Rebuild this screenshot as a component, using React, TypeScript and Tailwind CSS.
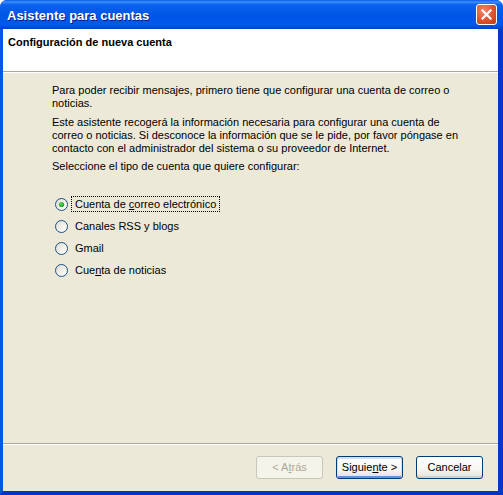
import type { ReactNode } from 'react'

const font = { fontFamily: '"Liberation Sans", Arial, sans-serif' }

function Radio({ checked }: { checked?: boolean }) {
  return (
    <svg width="13" height="13" viewBox="0 0 13 13" className="shrink-0">
      <defs>
        <linearGradient id="rfill" x1="0" y1="0" x2="1" y2="1">
          <stop offset="0" stopColor="#DCDAD1" />
          <stop offset="0.6" stopColor="#F4F3EE" />
          <stop offset="1" stopColor="#FFFFFF" />
        </linearGradient>
        <radialGradient id="rdot" cx="0.4" cy="0.4" r="0.6">
          <stop offset="0" stopColor="#5FE05C" />
          <stop offset="1" stopColor="#1C9A1C" />
        </radialGradient>
      </defs>
      <circle cx="6.5" cy="6.5" r="6" fill="url(#rfill)" stroke="#1C5180" strokeWidth="1" />
      {checked && <circle cx="6.5" cy="6.5" r="2.6" fill="url(#rdot)" />}
    </svg>
  )
}

function Option({ children, checked, focused }: { children: ReactNode; checked?: boolean; focused?: boolean }) {
  return (
    <div className="flex h-[22px] items-center">
      <Radio checked={checked} />
      <span
        className={`ml-[3px] px-[3px] leading-[14px] border border-dotted ${focused ? 'border-black' : 'border-transparent'}`}
      >
        {children}
      </span>
    </div>
  )
}

function Button({ children, disabled, primary }: { children: ReactNode; disabled?: boolean; primary?: boolean }) {
  const base = 'flex h-[23px] w-[67px] items-center justify-center rounded-[3px] border text-[11px]'
  if (disabled)
    return <div className={`${base} border-[#C9C7BA] bg-[#F5F4EA] text-[#ACA899]`}>{children}</div>
  return (
    <div
      className={`${base} border-[#003C74] bg-[linear-gradient(to_bottom,#FFFFFF_0%,#F7F6F2_60%,#E3E0D6_100%)] text-black ${
        primary ? 'shadow-[inset_0_1px_0_1px_#CEE1FC,inset_0_-1px_0_1px_#6C8FE0]' : 'shadow-[inset_0_-2px_0_0_#D6D0C5]'
      }`}
    >
      {children}
    </div>
  )
}

export default function App() {
  return (
    <div className="h-[495px] w-[503px] bg-white" style={font}>
      <div className="flex h-full flex-col overflow-hidden rounded-t-[7px] bg-[#0A48D8]">
        {/* title bar */}
        <div className="flex h-[29px] shrink-0 items-center justify-between bg-[linear-gradient(to_bottom,#0A5DE8_0%,#3D8EF9_7%,#0A62EE_16%,#0055E5_55%,#0059EC_85%,#0042C8_100%)] pl-[7px] pr-[6px]">
          <span className="pt-[3px] text-[13px] font-bold text-white [text-shadow:1px_1px_#0F1A8C]">
            Asistente para cuentas
          </span>
          <div className="flex h-[21px] w-[21px] items-center justify-center rounded-[3px] border border-white bg-[radial-gradient(circle_at_35%_30%,#F0876A_0%,#E0522E_55%,#C23A12_100%)]">
            <svg width="11" height="11" viewBox="0 0 11 11">
              <path d="M1.5 1.5 L9.5 9.5 M9.5 1.5 L1.5 9.5" stroke="white" strokeWidth="2.2" strokeLinecap="square" />
            </svg>
          </div>
        </div>

        {/* client area */}
        <div className="flex flex-1 flex-col border-b-[4px] border-l-[3px] border-r-[5px] border-b-[#0733C4] border-l-[#0855EA] border-r-[#0738C8] bg-[#ECE9D8] text-[11px] text-black">
          <div className="h-[43px] shrink-0 border-b border-[#ACA899] bg-white pl-[5px] pt-[7px] font-bold leading-[13px]">
            Configuración de nueva cuenta
          </div>
          <div className="flex flex-1 flex-col border-t border-white pl-[49px] pt-[11px] leading-[13px]">
            <p>
              Para poder recibir mensajes, primero tiene que configurar una cuenta de correo o
              <br />
              noticias.
            </p>
            <p className="mt-[6px]">
              Este asistente recogerá la información necesaria para configurar una cuenta de
              <br />
              correo o noticias. Si desconoce la información que se le pide, por favor póngase en
              <br />
              contacto con el administrador del sistema o su proveedor de Internet.
            </p>
            <p className="mt-[5px]">Seleccione el tipo de cuenta que quiere configurar:</p>
            <div className="mt-[20px] flex flex-col pl-[3px]">
              <Option checked focused>
                Cuenta de <u>c</u>orreo electrónico
              </Option>
              <Option>Canales RSS y blogs</Option>
              <Option>Gmail</Option>
              <Option>
                Cue<u>n</u>ta de noticias
              </Option>
            </div>
          </div>
          <div className="flex h-[48px] shrink-0 justify-end gap-[13px] border-t border-[#ACA899] pr-[15px] pt-[12px] shadow-[inset_0_1px_0_#FFFFFF]">
            <Button disabled>
              &lt; A<u>t</u>rás
            </Button>
            <Button primary>
              Siguie<u>n</u>te &gt;
            </Button>
            <Button>Cancelar</Button>
          </div>
        </div>
      </div>
    </div>
  )
}
